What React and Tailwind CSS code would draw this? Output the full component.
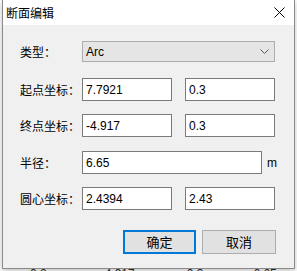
import React from 'react';

const cn = { fontFamily: '"Noto Sans CJK SC", "Liberation Sans", sans-serif' };
const latin = { fontFamily: '"Liberation Sans", "Noto Sans CJK SC", sans-serif' };

const Field = ({ value, className = 'w-[90px]' }) => (
  <div
    className={`h-[23px] shrink-0 border border-[#7a7a7a] bg-white px-[3px] flex items-center text-[12px] text-black ${className}`}
    style={latin}
  >
    {value}
  </div>
);

const Label = ({ children }) => (
  <div className="w-[62px] shrink-0 whitespace-nowrap text-[12px] text-black leading-none" style={cn}>
    {children}
  </div>
);

const Row = ({ label, children, className = '' }) => (
  <div className={`flex items-center ${className}`}>
    <Label>{label}</Label>
    {children}
  </div>
);

const SectionEditDialog = () => {
  return (
    <div className="ml-[2px] w-[293px] h-[269px] flex flex-col border-x border-b border-[#8a8a8a] shadow-[0_2px_6px_rgba(0,0,0,0.25)]">
      {/* title bar */}
      <div className="h-[25px] bg-white flex items-center justify-between pl-[3px] pr-[9px]">
        <span className="text-[12px] text-black" style={cn}>断面编辑</span>
        <svg width="11" height="11" viewBox="0 0 11 11">
          <path d="M0.5 0.5 L10.5 10.5 M10.5 0.5 L0.5 10.5" stroke="#000" strokeWidth="1" />
        </svg>
      </div>

      {/* body */}
      <div className="flex-1 bg-[#f0f0f0] pl-[17px] pt-[16px]">
        <Row label="类型：">
          <div className="w-[193px] h-[21px] border border-[#adadad] bg-[#e5e5e5] flex items-center justify-between pl-[3px] pr-[5px] text-[12px] text-black" style={latin}>
            <span>Arc</span>
            <svg width="9" height="6" viewBox="0 0 9 6">
              <path d="M0.5 0.5 L4.5 4.5 L8.5 0.5" stroke="#555" strokeWidth="1" fill="none" />
            </svg>
          </div>
        </Row>

        <Row label="起点坐标：" className="mt-[16px]">
          <div className="flex gap-[13px]">
            <Field value="7.7921" />
            <Field value="0.3" />
          </div>
        </Row>

        <Row label="终点坐标：" className="mt-[13px]">
          <div className="flex gap-[13px]">
            <Field value="-4.917" />
            <Field value="0.3" />
          </div>
        </Row>

        <Row label="半径：" className="mt-[14px]">
          <Field value="6.65" className="w-[180px]" />
          <span className="ml-[5px] text-[12px] text-black" style={latin}>m</span>
        </Row>

        <Row label="圆心坐标：" className="mt-[13px]">
          <div className="flex gap-[13px]">
            <Field value="2.4394" />
            <Field value="2.43" />
          </div>
        </Row>

        <div className="flex justify-end gap-[6px] mt-[20px] pr-[18px]">
          <button className="w-[73px] h-[24px] border-2 border-[#0078d7] bg-[#e1e1e1] text-[13px] text-black" style={cn}>
            确定
          </button>
          <button className="w-[74px] h-[24px] border border-[#adadad] bg-[#e1e1e1] text-[13px] text-black" style={cn}>
            取消
          </button>
        </div>
      </div>
    </div>
  );
};

export default function App() {
  return (
    <div className="w-[297px] h-[271px] bg-white overflow-hidden relative">
      <SectionEditDialog />
      {/* background table peeking below the dialog */}
      <div className="flex text-[12px] text-[#222] leading-none -mt-[1px]" style={latin}>
        <span className="ml-[30px]">0.2</span>
        <span className="ml-[58px]">4.917</span>
        <span className="ml-[52px]">0.3</span>
        <span className="ml-[50px]">6.65</span>
      </div>
    </div>
  );
}
